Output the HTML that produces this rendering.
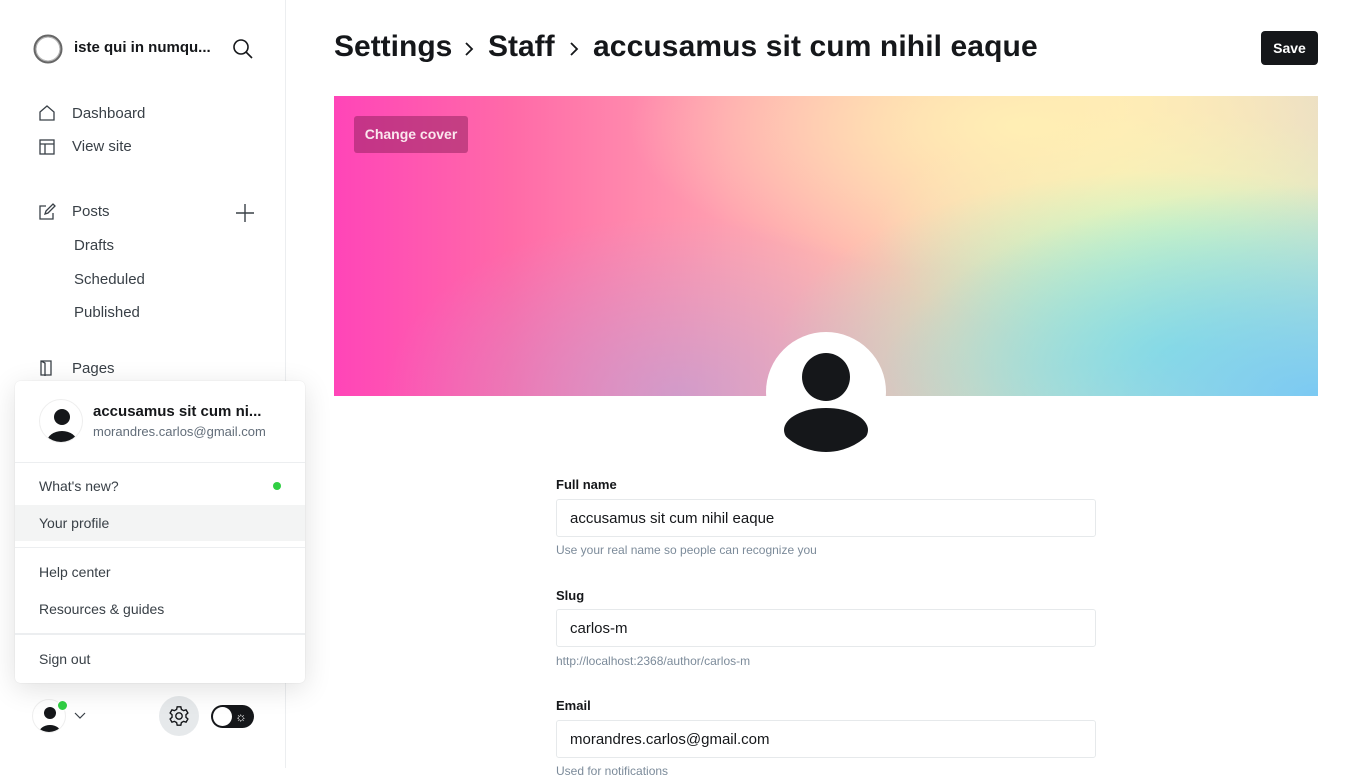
<!DOCTYPE html>
<html><head><meta charset="utf-8"><style>
*{box-sizing:border-box;margin:0;padding:0}
body{width:1366px;height:768px;overflow:hidden;background:#fff;font-family:"Liberation Sans",sans-serif;color:#15171a;position:relative}
.side{position:absolute;left:0;top:0;width:286px;height:768px;border-right:1px solid #eceef0;background:#fff}
.abs{position:absolute}
.nav{position:absolute;left:72px;font-size:15px;color:#394047}
.sub{position:absolute;left:74px;font-size:15px;color:#394047}
.menu{position:absolute;left:15px;top:381px;width:290px;height:302px;background:#fff;border-radius:5px;box-shadow:0 0 1px rgba(0,0,0,.15),0 6px 28px rgba(0,0,0,.12)}
.mi{position:absolute;left:24px;font-size:14px;color:#394047}
.hr{position:absolute;left:0;right:0;height:1px;background:#eceef0}
.t{position:absolute;top:30px;font-size:30px;font-weight:700;white-space:nowrap}
.save{position:absolute;left:1261px;top:31px;width:57px;height:34px;background:#15171a;color:#fff;font-size:14px;font-weight:700;border-radius:4px;text-align:center;line-height:34px}
.banner{position:absolute;left:334px;top:96px;width:984px;height:300px;
background:
radial-gradient(ellipse 45% 70% at 100% 100%,rgba(120,200,245,.95),rgba(120,200,245,0) 100%),
radial-gradient(ellipse 40% 60% at 85% 85%,rgba(140,240,215,.9),rgba(140,240,215,0) 100%),
radial-gradient(ellipse 40% 50% at 70% 10%,rgba(255,240,180,.95),rgba(255,240,180,0) 100%),
radial-gradient(ellipse 30% 40% at 85% 45%,rgba(225,250,190,.9),rgba(225,250,190,0) 100%),
radial-gradient(ellipse 30% 60% at 35% 100%,rgba(180,160,220,.6),rgba(180,160,220,0) 100%),
linear-gradient(90deg,#ff45b8 0%,#ff6aa8 18%,#ffa0b0 40%,#ffc8b0 60%,#ffe6b8 80%,#e8dcc8 100%)}
.cc{position:absolute;left:20px;top:20px;width:114px;height:37px;background:rgba(140,30,90,.5);color:#fbe7ee;font-size:14px;font-weight:700;border-radius:3px;text-align:center;line-height:37px}
.av{position:absolute;left:766px;top:332px;width:120px;height:120px;border-radius:50%;background:#fff;overflow:hidden}
.lbl{position:absolute;left:556px;font-size:13px;font-weight:700;color:#15171a}
.inp{position:absolute;left:556px;width:540px;height:38px;border:1px solid #e6e9eb;border-radius:3px;font-size:15px;padding-left:13px;line-height:38px;color:#15171a}
.hint{position:absolute;left:556px;font-size:12px;color:#7c8b9a}
</style></head><body>
<div class="side">
 <svg class="abs" style="left:32px;top:33px" width="32" height="32" viewBox="0 0 32 32"><circle cx="16" cy="16" r="13" fill="none" stroke="#666" stroke-width="3"/><circle cx="16" cy="16" r="12" fill="none" stroke="#bbb" stroke-width="1"/></svg>
 <div class="abs" style="left:74px;top:39px;font-size:15px;font-weight:700">iste qui in numqu...</div>
 <svg class="abs" style="left:232px;top:38px" width="22" height="22" viewBox="0 0 22 22" fill="none" stroke="#15171a" stroke-width="1.6"><circle cx="9" cy="9" r="7"/><path d="M14 14l6 6"/></svg>
 <svg class="abs" style="left:38px;top:104px" width="18" height="18" viewBox="0 0 18 18" fill="none" stroke="#394047" stroke-width="1.3"><path d="M2 8l7-6 7 6v8H2z"/></svg>
 <div class="nav" style="top:105px">Dashboard</div>
 <svg class="abs" style="left:38px;top:138px" width="18" height="18" viewBox="0 0 18 18" fill="none" stroke="#394047" stroke-width="1.3"><rect x="2" y="2" width="14" height="14"/><path d="M2 6h14M7 6v10"/></svg>
 <div class="nav" style="top:138px">View site</div>
 <svg class="abs" style="left:38px;top:203px" width="18" height="18" viewBox="0 0 18 18" fill="none" stroke="#394047" stroke-width="1.3"><path d="M8 3H2v13h13v-6M7 11l1-3 7-7 2 2-7 7z"/></svg>
 <div class="nav" style="top:203px">Posts</div>
 <svg class="abs" style="left:235px;top:203px" width="20" height="20" viewBox="0 0 20 20" stroke="#394047" stroke-width="1.4"><path d="M10 1v18M1 10h18"/></svg>
 <div class="sub" style="top:237px">Drafts</div>
 <div class="sub" style="top:271px">Scheduled</div>
 <div class="sub" style="top:304px">Published</div>
 <svg class="abs" style="left:38px;top:359px" width="18" height="18" viewBox="0 0 18 18" fill="none" stroke="#394047" stroke-width="1.3"><path d="M3 2h10v14H3zM3 2l4 2v13"/></svg>
 <div class="nav" style="top:360px">Pages</div>
 <div class="abs" style="left:32px;top:699px;width:34px;height:34px;border-radius:50%;border:1px solid #eee;overflow:hidden;background:#fff"><svg width="34" height="34" viewBox="0 0 34 34"><circle cx="17" cy="13" r="6" fill="#15171a"/><ellipse cx="17" cy="33" rx="11" ry="8" fill="#15171a"/></svg></div>
 <div class="abs" style="left:57px;top:700px;width:11px;height:11px;border-radius:50%;background:#30cf43;border:1px solid #fff"></div>
 <svg class="abs" style="left:74px;top:712px" width="12" height="8" viewBox="0 0 12 8" fill="none" stroke="#394047" stroke-width="1.2"><path d="M1 1l5 5 5-5"/></svg>
 <div class="abs" style="left:159px;top:696px;width:40px;height:40px;border-radius:50%;background:#e6e9eb"></div>
 <svg class="abs" style="left:168px;top:705px" width="22" height="22" viewBox="0 0 24 24" fill="none" stroke="#15171a" stroke-width="1.5"><circle cx="12" cy="12" r="3.5"/><path d="M10 2h4l.6 2.8 2.4 1.4 2.7-.9 2 3.4-2.1 1.9v2.8l2.1 1.9-2 3.4-2.7-.9-2.4 1.4L14 22h-4l-.6-2.8-2.4-1.4-2.7.9-2-3.4 2.1-1.9v-2.8L2.3 8.7l2-3.4 2.7.9 2.4-1.4z"/></svg>
 <div class="abs" style="left:211px;top:705px;width:43px;height:23px;border-radius:12px;background:#15171a"></div>
 <div class="abs" style="left:213px;top:707px;width:19px;height:19px;border-radius:50%;background:#fff"></div>
 <div class="abs" style="left:235px;top:707px;color:#fff;font-size:13px;line-height:19px">☼</div>
</div>
<div class="menu">
 <div class="abs" style="left:24px;top:18px;width:44px;height:44px;border-radius:50%;border:1px solid #eee;overflow:hidden;background:#fff"><svg width="44" height="44" viewBox="0 0 44 44"><circle cx="22" cy="17" r="8" fill="#15171a"/><ellipse cx="22" cy="42" rx="15" ry="11" fill="#15171a"/></svg></div>
 <div class="abs" style="left:78px;top:22px;font-size:15px;font-weight:700;color:#15171a">accusamus sit cum ni...</div>
 <div class="abs" style="left:78px;top:43px;font-size:13px;color:#626d79">morandres.carlos@gmail.com</div>
 <div class="hr" style="top:81px"></div>
 <div class="mi" style="top:97px">What's new?</div>
 <div class="abs" style="left:258px;top:101px;width:8px;height:8px;border-radius:50%;background:#30cf43"></div>
 <div class="abs" style="left:0;right:0;top:124px;height:36px;background:#f3f4f4"></div>
 <div class="mi" style="top:134px">Your profile</div>
 <div class="hr" style="top:166px"></div>
 <div class="mi" style="top:183px">Help center</div>
 <div class="mi" style="top:220px">Resources &amp; guides</div>
 <div class="hr" style="top:252px;height:2px"></div>
 <div class="mi" style="top:270px">Sign out</div>
</div>
<div class="t" style="left:334px">Settings</div>
<svg class="abs" style="left:464px;top:42px" width="10" height="14" viewBox="0 0 10 14" fill="none" stroke="#15171a" stroke-width="1.8"><path d="M2 1l6 6-6 6"/></svg>
<div class="t" style="left:488px">Staff</div>
<svg class="abs" style="left:569px;top:42px" width="10" height="14" viewBox="0 0 10 14" fill="none" stroke="#15171a" stroke-width="1.8"><path d="M2 1l6 6-6 6"/></svg>
<div class="t" style="left:593px;letter-spacing:.1px">accusamus sit cum nihil eaque</div>
<div class="save">Save</div>
<div class="banner"><div class="cc">Change cover</div></div>
<div class="av"><svg width="120" height="120" viewBox="0 0 120 120"><circle cx="60" cy="45" r="24" fill="#15171a"/><ellipse cx="60" cy="98" rx="42" ry="22" fill="#15171a"/></svg></div>
<div class="lbl" style="top:477px">Full name</div>
<div class="inp" style="top:499px">accusamus sit cum nihil eaque</div>
<div class="hint" style="top:543px">Use your real name so people can recognize you</div>
<div class="lbl" style="top:588px">Slug</div>
<div class="inp" style="top:609px">carlos-m</div>
<div class="hint" style="top:654px">http://localhost:2368/author/carlos-m</div>
<div class="lbl" style="top:698px">Email</div>
<div class="inp" style="top:720px">morandres.carlos@gmail.com</div>
<div class="hint" style="top:764px">Used for notifications</div>
</body></html>
